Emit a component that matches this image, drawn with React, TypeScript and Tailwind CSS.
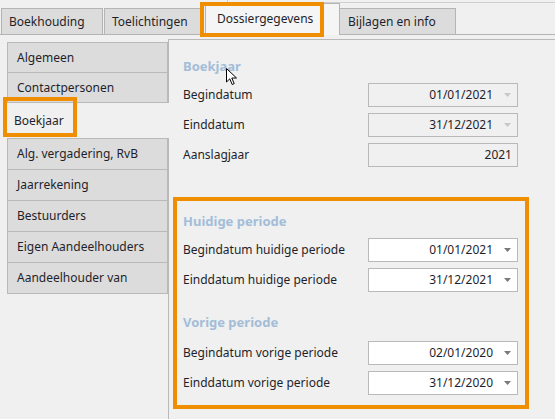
import React from "react";

const font = { fontFamily: '"Noto Sans", "Open Sans", sans-serif' };

function Arrow({ faint }: { faint?: boolean }) {
  return (
    <svg width="7" height="4" viewBox="0 0 7 4" className="shrink-0">
      <path d="M0 0 L7 0 L3.5 4 Z" fill={faint ? "#c8c8c8" : "#7a7a7a"} />
    </svg>
  );
}

function DateRow({ label, value, disabled }: { label: string; value: string; disabled?: boolean }) {
  return (
    <div className="flex items-center h-[24px]">
      <div className="flex-1 text-[12px] text-[#1f1f2a]">{label}</div>
      <div
        className={`w-[150px] h-[24px] border border-[#b9b9b9] flex items-center justify-end pr-[6px] ${
          disabled ? "bg-[#f0f0f0]" : "bg-white"
        }`}
      >
        <span className="text-[12px] text-[#1f1f2a] mr-[11px]">{value}</span>
        <Arrow faint={disabled} />
      </div>
    </div>
  );
}

function Header({ children, className }: { children: React.ReactNode; className?: string }) {
  return (
    <div className={`h-[18px] leading-[18px] text-[13px] font-bold text-[#a3bdd8] ${className ?? ""}`}>
      {children}
    </div>
  );
}

export default function App() {
  const tabs = [
    { t: "Boekhouding", w: "w-[102px]" },
    { t: "Toelichtingen", w: "w-[100px]" },
  ];
  const navTop = ["Algemeen", "Contactpersonen"];
  const navBottom = [
    "Alg. vergadering, RvB",
    "Jaarrekening",
    "Bestuurders",
    "Eigen Aandeelhouders",
    "Aandeelhouder van",
  ];
  return (
    <div className="relative w-[555px] h-[419px] bg-[#f0f0f0] overflow-hidden select-none" style={font}>
      {/* faint window edge top */}
      <div className="absolute left-[227px] top-0 w-[328px] h-[3px] border-l border-b border-[#cfcfcf]" />

      {/* tab strip */}
      <div className="relative h-[35px] flex items-end pl-[1px] border-b border-[#b4b4b4]">
        {tabs.map((x) => (
          <div
            key={x.t}
            className={`${x.w} h-[26px] mr-[1px] border border-b-0 border-[#b4b4b4] bg-[#dcdcdc] flex items-center pl-[7px] text-[12px] text-[#1f1f2a]`}
          >
            {x.t}
          </div>
        ))}
        <div className="relative z-10 w-[135px] h-[32px] -mb-px border border-b-0 border-[#b4b4b4] bg-[#f5f5f5] flex items-center pl-[11px] pb-[2px] text-[12px] text-[#1f1f2a]">
          Dossiergegevens
        </div>
        <div className="w-[116px] h-[26px] border border-b-0 border-l-0 border-[#b4b4b4] bg-[#dcdcdc] flex items-center pl-[8px] text-[12px] text-[#1f1f2a]">
          Bijlagen en info
        </div>
      </div>

      <div className="flex">
        {/* left nav */}
        <div className="w-[168px] pl-[7px] pt-[7px] flex flex-col">
          {navTop.map((n) => (
            <div
              key={n}
              className="w-[161px] h-[31px] -mb-px border border-[#b9b9b9] bg-[#dcdcdc] flex items-center pl-[9px] text-[12px] text-[#1f1f2a]"
            >
              {n}
            </div>
          ))}
          <div className="relative z-10 w-[162px] h-[35px] mt-px -mr-px bg-[#f0f0f0] flex items-center pl-[7px] text-[12px] text-[#1f1f2a]">
            Boekjaar
          </div>
          {navBottom.map((n) => (
            <div
              key={n}
              className="w-[161px] h-[32px] -mb-px border border-[#b9b9b9] bg-[#dcdcdc] flex items-center pl-[9px] text-[12px] text-[#1f1f2a]"
            >
              {n}
            </div>
          ))}
        </div>

        {/* right panel */}
        <div className="flex-1 mt-[4px] h-[390px] border-l border-t border-[#b9b9b9] pl-[14px] pr-[37px] flex flex-col">
          <Header className="mt-[17px]">Boekjaar</Header>
          <div className="mt-[8px] flex flex-col gap-[6px]">
            <DateRow label="Begindatum" value="01/01/2021" disabled />
            <DateRow label="Einddatum" value="31/12/2021" disabled />
            <div className="flex items-center h-[24px]">
              <div className="flex-1 text-[12px] text-[#1f1f2a]">Aanslagjaar</div>
              <div className="w-[150px] h-[24px] border border-[#b9b9b9] bg-[#f0f0f0] flex items-center justify-end pr-[5px] text-[12px] text-[#1f1f2a]">
                2021
              </div>
            </div>
          </div>

          <Header className="mt-[45px]">Huidige periode</Header>
          <div className="mt-[8px] flex flex-col gap-[6px]">
            <DateRow label="Begindatum huidige periode" value="01/01/2021" />
            <DateRow label="Einddatum huidige periode" value="31/12/2021" />
          </div>

          <Header className="mt-[21px]">Vorige periode</Header>
          <div className="mt-[10px] flex flex-col gap-[6px]">
            <DateRow label="Begindatum vorige periode" value="02/01/2020" />
            <DateRow label="Einddatum vorige periode" value="31/12/2020" />
          </div>
        </div>
      </div>

      {/* orange annotation boxes */}
      <div className="absolute left-[200px] top-[2px] w-[124px] h-[35px] border-4 border-[#ee8e00] z-20 pointer-events-none" />
      <div className="absolute left-[3px] top-[97px] w-[74px] h-[40px] border-4 border-[#ee8e00] z-20 pointer-events-none" />
      <div className="absolute left-[173px] top-[197px] w-[356px] h-[212px] border-4 border-[#ee8e00] z-20 pointer-events-none" />

      {/* mouse cursor */}
      <svg className="absolute left-[226px] top-[68px] z-30" width="12" height="18" viewBox="0 0 12 18">
        <path d="M0.5 0.5 L0.5 14 L3.8 10.8 L6.2 16.5 L8.2 15.6 L5.8 10 L10.5 10 Z" fill="white" stroke="black" strokeWidth="1" />
      </svg>
    </div>
  );
}
